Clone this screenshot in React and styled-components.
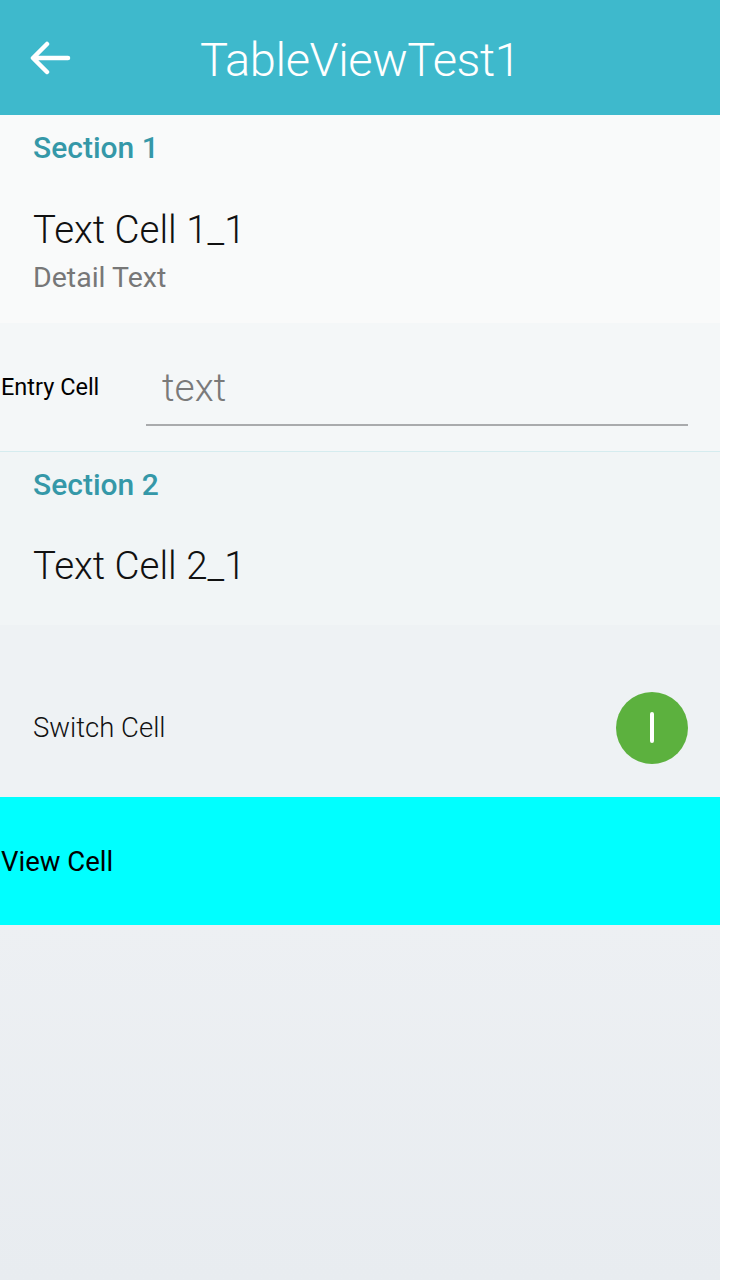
import React from "react";
import styled, { createGlobalStyle } from "styled-components";

const GlobalStyle = createGlobalStyle`
  html, body {
    margin: 0;
    padding: 0;
    background: #ffffff;
  }
  body {
    font-family: Roboto, "Open Sans", sans-serif;
  }
`;

const Screen = styled.div`
  width: 720px;
  height: 1280px;
  display: flex;
  flex-direction: column;
  background: linear-gradient(180deg, #fafafb 0%, #e8ecf0 100%);
  overflow: hidden;
`;

const Header = styled.header`
  height: 115px;
  flex-shrink: 0;
  background: #3eb9cc;
  display: flex;
  align-items: center;
  padding: 0 0 0 28px;
  box-sizing: border-box;
`;

const BackButton = styled.button`
  border: none;
  background: none;
  padding: 0;
  width: 44px;
  height: 44px;
  display: flex;
  align-items: center;
  justify-content: center;
  cursor: pointer;
`;

const Title = styled.h1`
  margin: 4px 0 0 128px;
  font-size: 47px;
  font-weight: 300;
  color: #ffffff;
  letter-spacing: -0.4px;
`;

const Section = styled.section`
  background: ${(p) => p.$bg};
  padding: 14px 0 0 33px;
  height: ${(p) => p.$height}px;
  flex-shrink: 0;
  box-sizing: border-box;
`;

const SectionTitle = styled.div`
  font-size: 30px;
  font-weight: 500;
  color: #3598a8;
  line-height: 38px;
`;

const CellText = styled.div`
  font-size: 38.5px;
  font-weight: 300;
  color: #111111;
  margin-top: ${(p) => p.$top}px;
  line-height: 46px;
`;

const DetailText = styled.div`
  font-size: 28.5px;
  font-weight: 400;
  color: #777777;
  line-height: 34px;
  margin-top: 8px;
`;

const EntryRow = styled.div`
  height: 129px;
  flex-shrink: 0;
  background: #f4f7f8;
  border-bottom: 1px solid #d5ecef;
  display: flex;
  align-items: center;
  padding: 0 32px 0 1px;
  box-sizing: border-box;
`;

const EntryLabel = styled.label`
  width: 145px;
  flex-shrink: 0;
  font-size: 23.5px;
  color: #000000;
`;

const EntryInput = styled.input`
  flex: 1;
  height: 60px;
  margin-top: 10px;
  border: none;
  border-bottom: 2px solid #a9abad;
  background: transparent;
  font-family: inherit;
  font-size: 39px;
  font-weight: 300;
  padding: 0 0 6px 16px;
  outline: none;
  &::placeholder {
    color: #7a7a7a;
  }
`;

const Gap = styled.div`
  height: 33px;
  flex-shrink: 0;
  background: #eef2f4;
`;

const SwitchRow = styled.div`
  height: 139px;
  flex-shrink: 0;
  background: #eef2f4;
  display: flex;
  align-items: center;
  justify-content: space-between;
  padding: 0 32px 0 33px;
  box-sizing: border-box;
`;

const SwitchLabel = styled.span`
  font-size: 27.5px;
  font-weight: 300;
  color: #111111;
`;

const Toggle = styled.div`
  width: 72px;
  height: 72px;
  border-radius: 50%;
  background: #5cb13e;
  display: flex;
  align-items: center;
  justify-content: center;
  &::after {
    content: "";
    width: 4px;
    height: 31px;
    border-radius: 2px;
    background: #ffffff;
  }
`;

const ViewCell = styled.div`
  height: 128px;
  flex-shrink: 0;
  background: #00ffff;
  display: flex;
  align-items: center;
  padding-left: 1px;
  font-size: 27.5px;
  font-weight: 400;
  color: #000000;
`;

export default function App() {
  return (
    <>
      <GlobalStyle />
      <Screen>
        <Header>
          <BackButton aria-label="back">
            <svg width="42" height="34" viewBox="0 0 42 34" fill="none">
              <path
                d="M39 17H5M18 3L4 17l14 14"
                stroke="#ffffff"
                strokeWidth="4.5"
                strokeLinecap="round"
                strokeLinejoin="round"
              />
            </svg>
          </BackButton>
          <Title>TableViewTest1</Title>
        </Header>
        <Section $bg="#f9fafa" $height={208}>
          <SectionTitle>Section 1</SectionTitle>
          <CellText $top={40}>Text Cell 1_1</CellText>
          <DetailText>Detail Text</DetailText>
        </Section>
        <EntryRow>
          <EntryLabel>Entry Cell</EntryLabel>
          <EntryInput placeholder="text" />
        </EntryRow>
        <Section $bg="#f1f5f6" $height={173}>
          <SectionTitle>Section 2</SectionTitle>
          <CellText $top={39}>Text Cell 2_1</CellText>
        </Section>
        <Gap />
        <SwitchRow>
          <SwitchLabel>Switch Cell</SwitchLabel>
          <Toggle />
        </SwitchRow>
        <ViewCell>View Cell</ViewCell>
      </Screen>
    </>
  );
}
